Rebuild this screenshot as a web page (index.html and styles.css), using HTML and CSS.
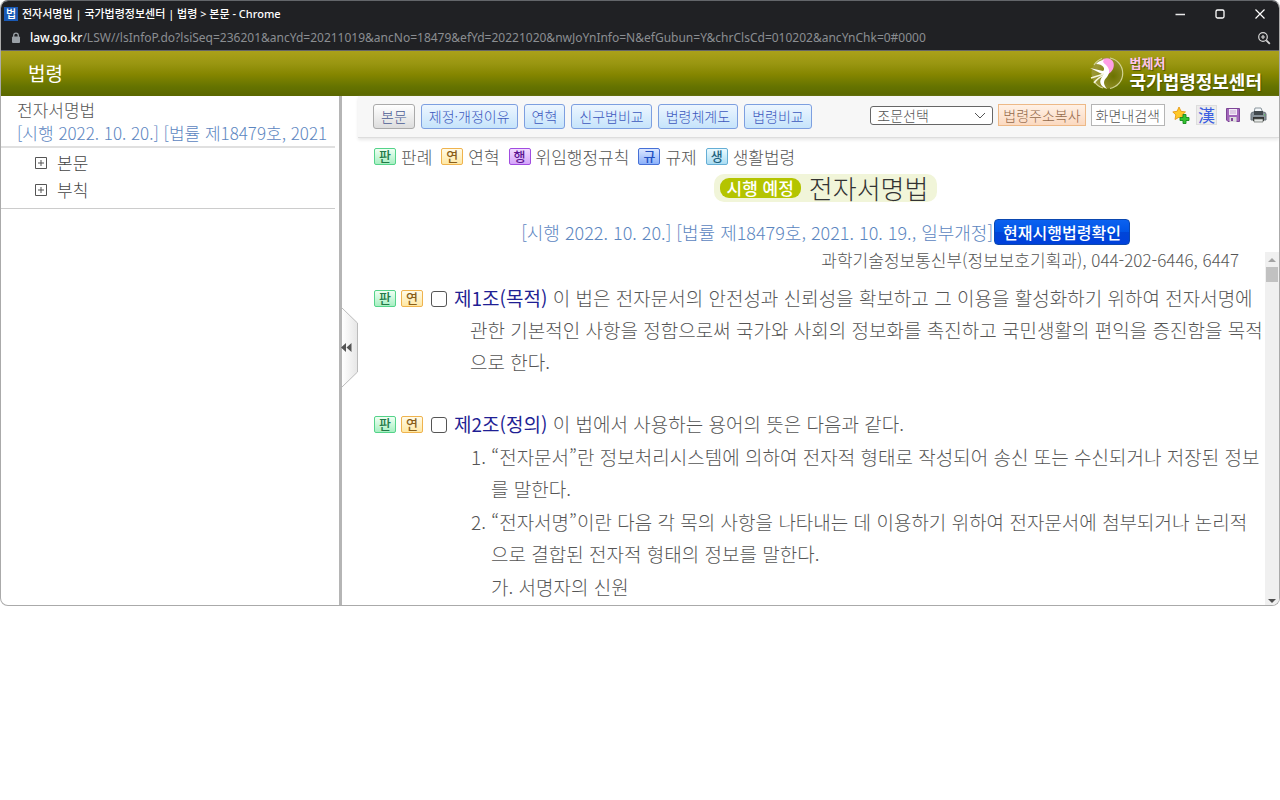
FILE: index.html
```
<!DOCTYPE html>
<html lang="ko">
<head>
<meta charset="utf-8">
<title>전자서명법 | 국가법령정보센터 | 법령 &gt; 본문</title>
<link rel="stylesheet" href="styles.css">
</head>
<body>
<div class="window">
  <div class="titlebar">
    <span class="favicon">법</span>
    <span class="window-title">전자서명법 | 국가법령정보센터 | 법령 &gt; 본문 - Chrome</span>
    <div class="window-controls">
      <button type="button" aria-label="최소화"><svg width="12" height="12" viewBox="0 0 12 12"><path d="M1.500 6.500h9.500" stroke="#e8e8e8" stroke-width="1.300"/></svg></button>
      <button type="button" aria-label="최대화"><svg width="12" height="12" viewBox="0 0 12 12"><rect x="2" y="2" width="8" height="8" rx="1.500" fill="none" stroke="#fff" stroke-width="1.300"/></svg></button>
      <button type="button" aria-label="닫기"><svg width="12" height="12" viewBox="0 0 12 12"><path d="M1.500 1.500l9 9M10.500 1.500l-9 9" stroke="#fff" stroke-width="1.200"/></svg></button>
    </div>
  </div>
  <div class="addressbar">
    <svg width="10" height="12" viewBox="0 0 10 12"><path d="M2.700 6V3.500a2.300 2.300 0 0 1 4.600 0V6" fill="none" stroke="#9aa0a6" stroke-width="1.300"/><rect x="1" y="4.500" width="8" height="6.500" rx="1" fill="#9aa0a6"/></svg>
    <span class="url"><b>law.go.kr</b>/LSW//lsInfoP.do?lsiSeq=236201&amp;ancYd=20211019&amp;ancNo=18479&amp;efYd=20221020&amp;nwJoYnInfo=N&amp;efGubun=Y&amp;chrClsCd=010202&amp;ancYnChk=0#0000</span>
    <button type="button" class="zoom" aria-label="확대"><svg width="14" height="14" viewBox="0 0 14 14" fill="none" stroke="#d5d5d5" stroke-width="1.200"><circle cx="6" cy="6" r="4.300"/><path d="M9.300 9.300l3.500 3.500" stroke-width="1.800"/><path d="M4 6h4M6 4v4"/></svg></button>
  </div>

  <header class="site-header">
    <h1>법령</h1>
    <a class="brand" href="#">
      <svg width="34" height="36" viewBox="0 0 34 36">
        <defs><radialGradient id="orb" cx=".7" cy=".6" r=".6"><stop offset="0" stop-color="#6c7200"/><stop offset="1" stop-color="#9a9633"/></radialGradient></defs>
        <circle cx="17" cy="18" r="15.500" fill="url(#orb)"/>
        <path d="M20 3a15.500 15.500 0 0 1 0 30.500M4 10A15.500 15.500 0 0 1 12 3.500M4 26a15.500 15.500 0 0 0 9 7" fill="none" stroke="#d2d394" stroke-width="1.200"/>
        <path d="M13 4c8-3 13 3 10 10-2 4-5 5-8 7 3-6 1-10-4-13z" fill="#ff9fe6"/>
        <path d="M6 9c3-3 5-4 8-4-2 2 0 3 2 5 4 4 4 8 1 12-4 4-4 7 0 12-7-3-9-8-4-13l-1-2-12-6 13 3c3-2 0-7-7-7z" fill="#fff"/>
        <path d="M14 19L1 23M13 21c-4 1-6 3-9 7" stroke="#f5f5dc" stroke-width="1.600" fill="none"/>
      </svg>
      <span class="brand-text"><small>법제처</small><strong>국가법령정보센터</strong></span>
    </a>
  </header>

  <div class="layout">
    <aside class="sidebar">
      <div class="law-head"><p>전자서명법</p><p class="law-info">[시행 2022. 10. 20.] [법률 제18479호, 2021</p></div>
      <ul class="tree">
        <li><svg width="12" height="12" viewBox="0 0 12 12"><path d="M.5.5h11v11H.5zM6 3v6M3 6h6" fill="none" stroke="#555"/></svg><a href="#body">본문</a></li>
        <li><svg width="12" height="12" viewBox="0 0 12 12"><path d="M.5.5h11v11H.5zM6 3v6M3 6h6" fill="none" stroke="#555"/></svg><a href="#body">부칙</a></li>
      </ul>
    </aside>
    <div class="divider">
      <button type="button" class="collapse" aria-label="목록 접기"><svg width="18" height="82" viewBox="0 0 18 82"><defs><linearGradient id="tab"><stop offset="0" stop-color="#fff"/><stop offset="1" stop-color="#e6e6e6"/></linearGradient></defs><path d="M1 1l15.500 15v49L1 80" fill="url(#tab)" stroke="#bbb"/><path d="M0 40.500l5-4.500v9zM5.500 40.500l5-4.500v9z" fill="#555"/></svg></button>
    </div>

    <main class="content" id="body">
      <nav class="toolbar">
        <div class="tabs">
          <button type="button" class="tab current">본문</button>
          <button type="button" class="tab">제정·개정이유</button>
          <button type="button" class="tab">연혁</button>
          <button type="button" class="tab">신구법비교</button>
          <button type="button" class="tab">법령체계도</button>
          <button type="button" class="tab">법령비교</button>
        </div>
        <div class="tools">
          <select aria-label="조문선택"><option>조문선택</option></select>
          <button type="button" class="tool copy">법령주소복사</button>
          <button type="button" class="tool">화면내검색</button>
          <button type="button" class="icon" aria-label="즐겨찾기"><svg width="18" height="18" viewBox="0 0 18 18"><path d="M7 1l2 4.300 4.500.6-3.400 3 1 4.600L7 11.200l-4 2.300.8-4.600L.8 5.900l4.300-.6z" fill="#ffc928" stroke="#e59a17" stroke-width=".9"/><path d="M11 8.500h3v3h3v3h-3v3h-3v-3H8v-3h3z" fill="#35c531" stroke="#168a1d" stroke-width=".9"/></svg></button>
          <button type="button" class="icon hanja" aria-label="한자">漢</button>
          <button type="button" class="icon" aria-label="저장"><svg width="14" height="14" viewBox="0 0 14 14"><path d="M.5.5h13v13H2L.5 12z" fill="#a266ba" stroke="#7d4596"/><path d="M3 1h8v6H3z" fill="#f3eaf7"/><path d="M4 3h6M4 5h6" stroke="#c5a9d0"/><path d="M3.500 9h7v5h-7z" fill="#ddd"/><path d="M5 10h2v3H5z" fill="#7d4596"/></svg></button>
          <button type="button" class="icon" aria-label="인쇄"><svg width="17" height="16" viewBox="0 0 17 16"><path d="M4 6l1-5h6l2 5z" fill="#f3f7fa" stroke="#8b969d"/><path d="M1 7q0-2 3-2h9q3 0 3 2v6H1z" fill="#88929a" stroke="#68727a"/><path d="M4 4h9v4H4z" fill="#41484d"/><path d="M3 10h11v4H3z" fill="#333"/><path d="M4 12h9v3H4z" fill="#e7eae8" stroke="#5c635c" stroke-width=".7"/><path d="M14 8h1" stroke="#49d44a"/></svg></button>
        </div>
      </nav>

      <ul class="legend">
        <li><span class="badge green">판</span>판례</li>
        <li><span class="badge amber">연</span>연혁</li>
        <li><span class="badge purple">행</span>위임행정규칙</li>
        <li><span class="badge blue">규</span>규제</li>
        <li><span class="badge sky">생</span>생활법령</li>
      </ul>
      <div class="law-title"><h2><span>시행 예정</span>전자서명법</h2></div>
      <div class="law-date"><span>[시행 2022. 10. 20.] [법률 제18479호, 2021. 10. 19., 일부개정]</span><button type="button">현재시행법령확인</button></div>

      <div class="reader">
        <div class="articles">
          <p class="contact">과학기술정보통신부(정보보호기획과), 044-202-6446, 6447</p>
          <section class="article">
            <div class="marks"><a class="badge green" href="#">판</a><a class="badge amber" href="#">연</a><input type="checkbox" id="a1"></div>
            <p class="lead"><label for="a1">제1조(목적)</label> 이 법은 전자문서의 안전성과 신뢰성을 확보하고 그 이용을 활성화하기 위하여 전자서명에 관한 기본적인 사항을 정함으로써 국가와 사회의 정보화를 촉진하고 국민생활의 편익을 증진함을 목적으로 한다.</p>
          </section>
          <section class="article">
            <div class="marks"><a class="badge green" href="#">판</a><a class="badge amber" href="#">연</a><input type="checkbox" id="a2"></div>
            <div class="clauses">
              <p class="lead"><label for="a2">제2조(정의)</label> 이 법에서 사용하는 용어의 뜻은 다음과 같다.</p>
              <p class="item">1. “전자문서”란 정보처리시스템에 의하여 전자적 형태로 작성되어 송신 또는 수신되거나 저장된 정보를 말한다.</p>
              <p class="item">2. “전자서명”이란 다음 각 목의 사항을 나타내는 데 이용하기 위하여 전자문서에 첨부되거나 논리적으로 결합된 전자적 형태의 정보를 말한다.</p>
              <p class="subitem">가. 서명자의 신원</p>
            </div>
          </section>
        </div>
        <div class="scrollbar">
          <svg width="8" height="5" viewBox="0 0 8 5"><path d="M0 5l4-4 4 4z" fill="#a3a3a3"/></svg>
          <span class="thumb"></span>
          <svg class="down" width="8" height="5" viewBox="0 0 8 5"><path d="M0 0h8L4 4z" fill="#505050"/></svg>
        </div>
      </div>
    </main>
  </div>
</div>
</body>
</html>
```
FILE: styles.css
```
* { box-sizing: border-box; }
body { margin: 0; background: #fff; color: #555; font-family: "Noto Sans CJK KR", sans-serif; font-weight: 300; }
p, h1, h2, ul { margin: 0; padding: 0; }
ul { list-style: none; }
a { color: inherit; text-decoration: none; }
button { font: inherit; padding: 0; border: 0; background: none; color: inherit; white-space: nowrap; }
svg { display: block; flex: none; }

.window { border: 1px solid #aaa; border-top-color: #63666a; border-radius: 8px; overflow: hidden; background: #fff; }
.titlebar { display: flex; align-items: center; height: 26px; background: #202124; color: #fff; padding: 0 9px 0 3px; gap: 4px; font: 500 11px/16px "Noto Sans", "Noto Sans CJK KR", sans-serif; }
.favicon { width: 14px; height: 14px; background: #1959b5; font-size: 11px; line-height: 13px; text-align: center; }
.window-controls { display: flex; gap: 28px; margin-left: auto; padding-right: 4px; }
.addressbar { display: flex; align-items: center; height: 24px; background: #202124; border-bottom: 1px solid #666; color: #8b8e92; padding: 0 8px 2px 10px; gap: 9px; font: 400 12px/16px "Noto Sans", sans-serif; }
.url b { color: #fff; font-weight: 500; }
.zoom { margin-left: auto; }

.site-header { display: flex; align-items: center; height: 45px; padding: 0 17px 2px 27px; background: linear-gradient(#aba11a, #999611 28%, #858600 52%, #667400 78%, #5a6700); color: #fff; }
.site-header h1 { font-size: 19px; line-height: 24px; font-weight: 400; }
.brand { display: flex; align-items: center; gap: 6px; margin-left: auto; }
.brand-text { display: flex; flex-direction: column; text-shadow: 1px 1px 1px #4b5500; }
.brand small { color: #ffc4ea; font-size: 13px; line-height: 17px; font-weight: 700; }
.brand strong { font-size: 18px; line-height: 20px; font-weight: 700; }

.layout { display: flex; }
.sidebar { width: 338px; flex: none; padding-right: 4px; }
.law-head { height: 52px; border-bottom: 2px solid #e0e0e0; padding: 2px 0 0 16px; font-size: 17px; line-height: 23px; white-space: nowrap; }
.law-info, .law-date { color: #5c86bf; }
.tree { border-bottom: 1px solid #ccc; padding: 1px 0 5px 34px; }
.tree li { display: flex; align-items: center; gap: 10px; height: 27px; font-size: 17px; color: #444; }
.divider { position: relative; width: 3px; flex: none; background: #b5b5b5; }
.collapse { position: absolute; left: 2px; top: 211px; }

.content { flex: 1; min-width: 0; }
.toolbar { display: flex; align-items: center; justify-content: space-between; height: 42px; margin-left: 16px; padding: 0 10px 1px 15px; background: #f7f7f7; border-bottom: 1px solid #ddd; box-shadow: 0 2px 3px #e8e8e8; }
.tabs { display: flex; gap: 6px; }
.tab { height: 25px; padding: 0 7px; border: 1px solid #7d9fe0; border-radius: 3px; background: linear-gradient(#edf6ff, #c6e4fb); color: #3c58bd; font-size: 14px; line-height: 21px; }
.tab.current { border-color: #aaa; background: linear-gradient(#fff, #ddd); color: #4c5d94; }
.tools { display: flex; align-items: center; gap: 5px; padding-bottom: 2px; }
.tools select { appearance: none; width: 123px; height: 19px; padding: 0 6px; border: 1px solid #666; border-radius: 3px; color: #555; font: inherit; font-size: 14px; line-height: 16px; background: #fff url("data:image/svg+xml,%3Csvg xmlns='http://www.w3.org/2000/svg' width='12' height='7'%3E%3Cpath d='M1 1l5 5 5-5' fill='none' stroke='%23555'/%3E%3C/svg%3E") no-repeat right 6px center; }
.tool { height: 22px; padding: 0 4px; border: 1px solid #b5b5b5; background: #fff; font-size: 14px; line-height: 18px; }
.tool.copy { border-color: #edb987; background: linear-gradient(#fff1e6, #fbd9c0); color: #946a4b; }
.icon { display: grid; place-items: center; width: 21px; height: 20px; }
.hanja { border: 1px solid #ddd; background: #ececec; color: #3c5ee0; font-size: 17px; line-height: 18px; font-weight: 400; }

.legend { display: flex; gap: 9px; padding: 6px 0 0 32px; font-size: 17px; line-height: 25px; }
.legend li { display: flex; align-items: center; gap: 5px; }
.badge { display: block; width: 22px; height: 17px; border: 1px solid; border-radius: 2px; font-size: 13px; line-height: 14px; font-weight: 500; text-align: center; }
.green { border-color: #55d38a; background: linear-gradient(#effff3, #a7efc2); color: #247a48; }
.amber { border-color: #efb34e; background: linear-gradient(#fffbe9, #ffe8a4); color: #8a5e19; }
.purple { border-color: #a14ce0; background: linear-gradient(#f1dcff, #d4a4fa); color: #5b1591; }
.blue { border-color: #4670d6; background: linear-gradient(#dce7ff, #8cb1fa); color: #204fc2; }
.sky { border-color: #65aed5; background: linear-gradient(#eafaff, #aadcf2); color: #1d617e; }

.law-title { display: flex; justify-content: center; padding: 5px 0 0 30px; }
.law-title h2 { display: flex; align-items: center; gap: 8px; height: 28px; padding: 0 9px 0 6px; border-radius: 10px; background: #f1f5d9; color: #333; font-size: 26px; line-height: 28px; font-weight: 300; }
.law-title span { padding: 0 7px; border-radius: 9px; background: #b4c400; color: #fff; font-size: 17px; line-height: 20px; font-weight: 500; }
.law-date { display: flex; justify-content: center; align-items: center; gap: 1px; padding: 17px 0 0 30px; font-size: 18px; line-height: 24px; }
.law-date button { height: 26px; padding: 0 8px; border: 1px solid #0b48b0; border-radius: 4px; background: linear-gradient(#0b62f0, #0054e6 50%, #0045d8 51%, #0041dc); color: #fff; font-size: 16px; line-height: 22px; font-weight: 500; }

.reader { display: flex; margin-top: 7px; }
.articles { flex: 1; min-width: 0; padding: 0 1px 2px 32px; font-size: 19px; line-height: 32px; }
.contact { font-size: 17px; line-height: 16px; text-align: right; padding-right: 25px; }
.article { display: flex; margin-top: 30px; }
.contact + .article { margin-top: 14px; }
.marks { display: flex; align-items: center; gap: 5px; height: 32px; flex: none; margin-right: 7px; }
.marks input { appearance: none; width: 16px; height: 16px; margin: 2px 0 0 3px; border: 1px solid #555; border-radius: 3px; background: #fff; }
.lead { padding-left: 16px; text-indent: -16px; }
.lead label { color: #1f1f94; font-weight: 400; }
.item { margin: 1px 0 0 17px; padding-left: 20px; text-indent: -20px; }
.subitem { margin: 1px 0 0 37px; }
.scrollbar { display: flex; flex-direction: column; align-items: center; width: 14px; padding: 5px 0 1px; background: #f0f0f0; }
.thumb { width: 12px; height: 15px; margin-top: 5px; background: #c1c1c1; }
.down { margin-top: auto; }
```
